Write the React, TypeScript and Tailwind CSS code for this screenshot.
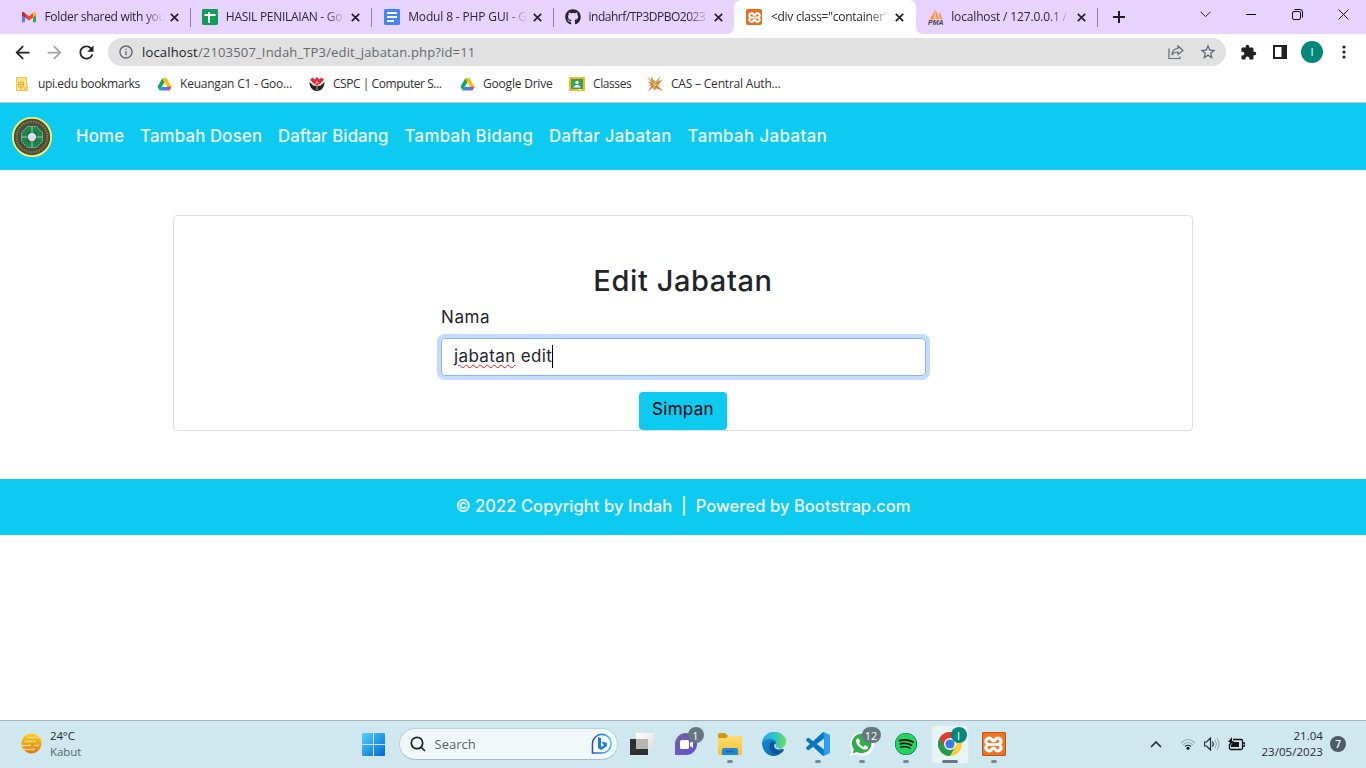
import type { ReactNode } from "react";
import { FaGithub, FaSpotify } from "react-icons/fa";
import { MdArrowBack, MdArrowForward, MdRefresh, MdInfoOutline, MdStarOutline, MdExtension } from "react-icons/md";

function Gmail() {
  return (
    <svg width="16" height="16" viewBox="0 0 16 16">
      <path d="M1 4v9.200h3V7z" fill="#4285f4" />
      <path d="M15 4v9.200h-3V7z" fill="#34a853" />
      <path d="M4 4.200v4.300l4 3 4-3V4.200L8 7.200z" fill="#ea4335" />
      <path d="M1 4.200v1.900l3 2.400V4.200C2.800 2.300 1 2.800 1 4.200z" fill="#c5221f" />
      <path d="M15 4.200v1.900l-3 2.400V4.200c1.200-1.900 3-1.400 3 0z" fill="#fbbc04" />
    </svg>
  );
}

function Sheets() {
  return (
    <svg width="16" height="16" viewBox="0 0 16 16">
      <rect width="16" height="16" rx="1.400" fill="#0f9d58" />
      <path d="M2.500 6h11M7 3v11" stroke="#fff" strokeWidth="2" />
    </svg>
  );
}

function Docs() {
  return (
    <svg width="16" height="16" viewBox="0 0 16 16">
      <rect width="16" height="16" rx="1.400" fill="#4285f4" />
      <path d="M3 4h10M3 8h10M3 12h7" stroke="#fff" strokeWidth="1.800" />
    </svg>
  );
}

function Xampp({ big = false }: { big?: boolean }) {
  return (
    <span className={big ? "flex size-6 items-center justify-center rounded-[2px] bg-[#ee7426] ring-1 ring-inset ring-[#b9551a]" : "flex size-4 items-center justify-center rounded-[2px] bg-[#e96b1c]"}>
      <svg width={big ? 19 : 13} height={big ? 19 : 13} viewBox="0 0 18 18" fill="none" stroke="#fff" strokeWidth="3">
        <path d="M6.600 9H5a3 3 0 1 1 2-5.100C7.800 4.700 7.300 5.700 9 5.700s1.200-1 2-1.800A3 3 0 1 1 13 9h-1.600M5 9a3 3 0 1 0 2 5.100c.8-.8.300-1.800 2-1.800s1.200 1 2 1.800A3 3 0 1 0 13 9" />
        <path d="M6 9h6" strokeWidth="2.500" />
      </svg>
    </span>
  );
}

function PhpMyAdmin() {
  return (
    <svg width="16" height="16" viewBox="0 0 16 16">
      <path d="M6.500 0c-.5 4-2.500 7-5 10.300h5zM7.300 1l.3 9.300h3C10.300 6 9 3 7.300 1zM11 3.200c1.800 2 2.700 4 3.500 7.100h-3z" fill="#f59b31" />
      <text x="0" y="15.800" fontSize="6.500" fontWeight="700" fontStyle="italic" fontFamily="Liberation Sans, sans-serif" textLength="15.500" lengthAdjust="spacingAndGlyphs" fill="#42424e">PMA</text>
    </svg>
  );
}

function Drive() {
  return (
    <svg width="15" height="15" viewBox="0 0 16 16">
      <path d="M5.500 1.500h5L5.200 10.700 2.800 14.500.5 10.500z" fill="#11a861" />
      <path d="M5.500 1.500h5l5 9h-5z" fill="#ffc107" />
      <path d="M5.200 10.500h10.300l-2.500 4H2.800z" fill="#3b7ff0" />
      <path d="M11 10.500h4.500l-2.400 4z" fill="#ea4335" />
      <path d="M8 5.500l2.800 5H5.200z" fill="#fff" />
    </svg>
  );
}

function YellowBook() {
  return (
    <svg width="12" height="14" viewBox="0 0 12 14">
      <path d="M.5.5h10v9h1v4H.5z" fill="#ffe38b" stroke="#e9c653" />
      <path d="M2.500 5h5v5h-5zM5 5v8M2.500 7.500h5M9 10v3" stroke="#dcb435" fill="none" />
    </svg>
  );
}

function Cspc() {
  return (
    <svg width="16" height="16" viewBox="0 0 16 16">
      <path d="M.5 6c0 12 15 12 15 0l-4 3.500-3.500.5-3.500-.5z" fill="#252525" />
      <path d="M1 3.500l3-2 1.500 2L8 1l2.500 2.500L12 1.500l3 2L11.500 8 8 10 4.500 8z" fill="#e22d32" />
      <path d="M1 5l5 4 2-4 2 4 5-4M8 9v5" stroke="#fff" strokeWidth=".6" fill="none" />
    </svg>
  );
}

function Classroom() {
  return (
    <svg width="16" height="14" viewBox="0 0 16 14">
      <rect width="16" height="14" rx="1" fill="#f2bb1d" />
      <rect x="2" y="2" width="12" height="10" fill="#35a15b" />
      <circle cx="8" cy="5.500" r="1.700" fill="#fff" />
      <path d="M4.500 10.500c0-3.500 7-3.500 7 0z" fill="#fff" />
      <path d="M9.500 12h3v1h-3z" fill="#fff" />
    </svg>
  );
}

function Cas() {
  return (
    <svg width="17" height="16" viewBox="0 0 17 16">
      <path d="M0 0l4.500 4L4 0l4.500 5.500L14.500 0 12 5l4.500-1.500L13 8l-1 1.500 5 6-7.500-3L8.500 15 6 12l-5 4 3.500-6L1 9l3-.500L1 5.500l3 .500z" fill="#c98c3d" />
      <path d="M3 3l6 7M6 13l4-5 5 6M12 3L7 9" stroke="#f6e3c4" strokeWidth=".6" fill="none" />
    </svg>
  );
}

const tabs: { icon: ReactNode; title: string; cls: string; active?: boolean }[] = [
  { icon: <Gmail />, title: "Folder shared with you", cls: "tracking-[-0.32px]" },
  { icon: <Sheets />, title: "HASIL PENILAIAN - Go", cls: "tracking-[-0.28px]" },
  { icon: <Docs />, title: "Modul 8 - PHP GUI - G", cls: "tracking-[-0.15px] pl-px" },
  { icon: <FaGithub size={16} color="#24292f" />, title: "indahrf/TP3DPBO2023", cls: "tracking-[-0.5px]" },
  { icon: <Xampp />, title: '<div class="container"', cls: "tracking-[-0.25px] pl-px", active: true },
  { icon: <PhpMyAdmin />, title: "localhost / 127.0.0.1 /", cls: "tracking-[-0.15px]" },
];

const bookmarks: { icon: ReactNode; label: string; box: string; cls: string }[] = [
  { icon: <YellowBook />, label: "upi.edu bookmarks", box: "w-[142px]", cls: "tracking-[-0.38px]" },
  { icon: <Drive />, label: "Keuangan C1 - Goo...", box: "w-[153px]", cls: "tracking-[-0.22px]" },
  { icon: <Cspc />, label: "CSPC | Computer S...", box: "w-[150px]", cls: "tracking-[-0.45px]" },
  { icon: <Drive />, label: "Google Drive", box: "w-[110px]", cls: "tracking-[-0.2px]" },
  { icon: <Classroom />, label: "Classes", box: "w-[78px]", cls: "tracking-[-0.4px]" },
  { icon: <Cas />, label: "CAS – Central Auth...", box: "w-[140px]", cls: "tracking-[-0.2px]" },
];

function TabStrip() {
  return (
    <div className="flex h-[34px] bg-[#e8d3ff] pl-[9px]">
      {tabs.map((t, i) => (
        <div key={t.title} className="relative flex h-[34px] w-[181.350px] shrink-0 items-center pl-3">
          {t.active && (
            <svg className="absolute -left-2 top-0" width="198" height="34" viewBox="0 0 198 34">
              <path d="M0 34Q8 34 8 26V8Q8 0 16 0H182Q190 0 190 8V26Q190 34 198 34z" fill="#fff" />
            </svg>
          )}
          <span className="relative flex w-[23.500px] shrink-0">{t.icon}</span>
          <span className={`relative w-[120px] shrink-0 overflow-hidden whitespace-nowrap text-[12px] leading-4 text-[#2b2531] [mask-image:linear-gradient(to_right,black_82%,transparent)] ${t.cls}`}>{t.title}</span>
          <svg className="relative ml-[5.500px] shrink-0" width="9" height="9" viewBox="0 0 9 9" stroke="#222" strokeWidth="1.700">
            <path d="M.8.8l7.400 7.400M8.200.8L.8 8.200" />
          </svg>
          {i !== 3 && !t.active && <span className="absolute right-[-0.600px] top-2 h-[19px] w-px bg-[#91859c]" />}
        </div>
      ))}
      <div className="flex w-[44px] items-center justify-center">
        <svg width="12" height="12" viewBox="0 0 12 12" stroke="#1d1d1f" strokeWidth="2"><path d="M6 0v12M0 6h12" /></svg>
      </div>
      <div className="ml-auto flex h-[29px] items-center">
        <span className="flex w-[46px] justify-center"><svg width="11" height="7" viewBox="0 0 11 7" fill="none" stroke="#222"><path d="M.5.7l5 5 5-5" /></svg></span>
        <span className="flex w-[46px] justify-center"><span className="h-px w-[10px] bg-black" /></span>
        <span className="flex w-[46px] justify-center">
          <svg width="11" height="11" viewBox="0 0 11 11" fill="none" stroke="#111"><rect x=".5" y="2.500" width="8" height="8" rx="1.500" /><path d="M2.500.5H8Q10.500.5 10.500 3v5.500" /></svg>
        </span>
        <span className="flex w-[46px] justify-center"><svg width="11" height="11" viewBox="0 0 11 11" stroke="#111"><path d="M.5.5l10 10M10.500.5l-10 10" /></svg></span>
      </div>
    </div>
  );
}

function Toolbar() {
  return (
    <div className="flex h-9 items-center pl-[6px]">
      <span className="flex w-8 justify-center"><MdArrowBack size={21} color="#202124" /></span>
      <span className="flex w-8 justify-center"><MdArrowForward size={21} color="#a3a3a3" /></span>
      <span className="flex w-8 justify-center"><MdRefresh size={21} color="#202124" /></span>
      <div className="ml-[6px] flex h-7 w-[1118px] items-center rounded-full bg-[#e1e1e1] pl-[10px] pr-[9px]">
        <MdInfoOutline size={16} color="#5f6368" />
        <span className="ml-2 whitespace-nowrap text-[13px] leading-5 tracking-[0.16px] text-[#66696d]"><span className="text-[#202124]">localhost</span>/2103507_Indah_TP3/edit_jabatan.php?id=11</span>
        <svg className="ml-auto" width="16" height="15" viewBox="0 0 16 15" fill="none" stroke="#686b6e" strokeWidth="1.200">
          <path d="M1 3.500V13.500h11V11.500" /><path d="M10 1l5 4.500-5 4V7C7 7 5 8 4 10c0-4 2.500-6.300 6-6.500z" />
        </svg>
        <MdStarOutline className="ml-[15px]" size={18} color="#5f6368" />
      </div>
      <span className="ml-[6px] flex w-8 justify-center"><MdExtension size={17} color="#202124" /></span>
      <span className="flex w-8 justify-center"><svg width="14" height="14" viewBox="0 0 14 14"><path d="M0 0h14v14H0zM2 2v10h6.500V2z" fill="#202124" fillRule="evenodd" /></svg></span>
      <span className="flex w-8 justify-center"><span className="flex size-[22px] items-center justify-center rounded-full bg-[#00897b] text-[11px] text-white">I</span></span>
      <span className="flex w-8 justify-center"><svg width="4" height="14" viewBox="0 0 4 14" fill="#202124"><circle cx="2" cy="2" r="1.600" /><circle cx="2" cy="7" r="1.600" /><circle cx="2" cy="12" r="1.600" /></svg></span>
    </div>
  );
}

function Emblem() {
  return (
    <svg width="40" height="40" viewBox="0 0 40 40">
      <circle cx="20" cy="20" r="19.100" fill="#49493f" stroke="#f9f36a" strokeWidth="1.800" />
      <circle cx="20" cy="20" r="15.300" fill="none" stroke="#8f8532" strokeWidth="2.200" strokeDasharray="1.300 1.300" />
      <circle cx="20" cy="20" r="12.700" fill="#4c4c46" />
      <path d="M15.500 9.500h9l6 6v9l-6 6h-9l-6-6v-9z" fill="#17894a" stroke="#9eb78d" strokeWidth=".7" />
      <path d="M20 9.500v21M9.500 20h21" stroke="#a9d3ac" strokeWidth=".9" />
      <path d="M15.500 15.500h9v9h-9z" fill="#4a4152" /><circle cx="20" cy="20" r="4.200" fill="#dcdde6" />
    </svg>
  );
}

const links = [
  { label: "Home", box: "w-16", cls: "tracking-[0.200px]" },
  { label: "Tambah Dosen", box: "w-[138px]", cls: "tracking-[0.180px]" },
  { label: "Daftar Bidang", box: "w-[126.500px]", cls: "tracking-[0.080px]" },
  { label: "Tambah Bidang", box: "w-[144.500px]", cls: "tracking-[0.330px]" },
  { label: "Daftar Jabatan", box: "w-[138.500px]", cls: "tracking-[0.300px]" },
  { label: "Tambah Jabatan", box: "w-[150px]", cls: "tracking-[0.450px]" },
];

function WebPage() {
  return (
    <main className="h-[617px] font-['Inter',sans-serif] text-base text-[#212529]">
      <nav className="flex h-[67px] items-center bg-[#0dcaf0] pl-3">
        <Emblem />
        <div className="mb-0.5 ml-6 flex whitespace-nowrap text-[16.800px] leading-6 font-[450] text-[#f3fcff]">
          {links.map((l) => <a key={l.label} className={`${l.box} ${l.cls}`}>{l.label}</a>)}
        </div>
      </nav>
      <section className="mx-auto mt-[45px] flex h-[216px] w-[1020px] flex-col items-center rounded border border-[#dfdfdf]">
        <h1 className="mt-[47px] whitespace-nowrap text-[29px] font-medium leading-[35px] tracking-[0.600px]">Edit Jabatan</h1>
        <form className="ml-[1px] mt-[7px] w-[485px]">
          <label className="block text-[17px] leading-6 tracking-[0.600px]">Nama</label>
          <div className="mt-[9px] flex h-[38px] items-center rounded border border-[#86b7fe] pb-px pl-3 text-[17px] shadow-[0_0_0_4px_#c2dbfe]">
            <span className="whitespace-nowrap tracking-[0.370px]"><span className="underline decoration-[#e11] decoration-wavy decoration-1 underline-offset-[2px]">jabatan</span> edit</span>
            <span className="h-[23px] w-px bg-black" />
          </div>
        </form>
        <button type="button" className="mt-4 h-[38px] w-[88px] shrink-0 rounded bg-[#0dcaf0] pb-0.5 text-[17px] tracking-[0.300px] text-black">Simpan</button>
      </section>
      <footer className="mt-12 flex h-14 items-center justify-center whitespace-pre bg-[#0dcaf0] pb-0.5 text-[16.600px] font-[450] text-[#f6fdff]">
        <span className="tracking-[0.020px]">© 2022 Copyright by Indah&nbsp; |&nbsp; Powered by Bootstrap.com</span>
      </footer>
    </main>
  );
}

function Bing() {
  return (
    <svg width="22" height="22" viewBox="0 0 22 22">
      <defs><linearGradient id="bing" x1="0" x2="1"><stop stopColor="#2753c8" /><stop offset="1" stopColor="#38c6f4" /></linearGradient></defs>
      <path d="M1.500 20V10.500A9.300 9.300 0 1 1 10.500 20z" fill="#fff" stroke="url(#bing)" strokeWidth="1.600" />
      <path d="M7 4l3 1.200v8.800l3.500-2-1.700-.8-1-2.700L15.800 10v3.300L10 17l-3-2z" fill="#167be2" />
    </svg>
  );
}

function TaskView() {
  return (
    <svg width="24" height="22" viewBox="0 0 24 22">
      <defs><linearGradient id="white" x1="0" x2="1" y2="1"><stop stopColor="#fff" /><stop offset="1" stopColor="#ddd" /></linearGradient></defs>
      <path d="M0 6h18v16H0z" fill="#30302f" /><path d="M6 0h18v16H6z" fill="url(#white)" /><path d="M6 6h12v10H6z" fill="#b6b7b5" />
    </svg>
  );
}

function Chat() {
  return (
    <svg width="24" height="24" viewBox="0 0 24 24">
      <defs><linearGradient id="chat" x1="0" x2="1" y2="1"><stop stopColor="#7d6196" /><stop offset="1" stopColor="#5752d8" /></linearGradient></defs>
      <path d="M1 23V12A11 11 0 1 1 12 23z" fill="url(#chat)" /><rect x="6" y="8" width="9" height="9" rx="1.500" fill="#fff" /><path d="M16 11l3-2v7l-3-2z" fill="#fff" />
    </svg>
  );
}

function Folder() {
  return (
    <svg width="24" height="24" viewBox="0 0 24 24">
      <defs><linearGradient id="folder" x1="0" x2="0" y2="1"><stop stopColor="#ffdf70" /><stop offset="1" stopColor="#f8be31" /></linearGradient></defs>
      <path d="M0 3q0-2 2-2h5l3 3h12q2 0 2 2v5H0z" fill="#d6990d" /><path d="M0 6h8l2-2h12q2 0 2 2v15q0 2-2 2H2q-2 0-2-2z" fill="url(#folder)" />
      <path d="M4 23v-5q0-2 2-2h12q2 0 2 2v5z" fill="#2088d7" /><path d="M8 19.500h8" stroke="#1365a9" strokeWidth="1.500" />
    </svg>
  );
}

function Edge() {
  return (
    <svg width="24" height="24" viewBox="0 0 24 24">
      <defs><linearGradient id="edge-top" x1="0" x2="1"><stop stopColor="#24a7e4" /><stop offset=".5" stopColor="#2ac3d2" /><stop offset="1" stopColor="#70df55" /></linearGradient><linearGradient id="edge-low" x1="0" x2="1" y2="1"><stop stopColor="#1697dc" /><stop offset="1" stopColor="#0b559f" /></linearGradient></defs>
      <path d="M0 11C1 4 6 0 12 0c7 0 12 5 12 10l-4 4.500-1.500 2 3.500.500c-2 4-6 7-10 7C5 24 0 18 0 11z" fill="url(#edge-low)" />
      <path d="M0 11C1 4 6 0 12 0c7 0 12 5 12 10 0 4-3 6-6 6-4 0-5-1-4-3 1-4-2-6-6-6-4 0-7 2-8 4z" fill="url(#edge-top)" />
      <path d="M9 10c-4 5 0 12 7 12 3-1 5-2 6-4-5 2-10 0-10-4 0-2 1-3 1-4z" fill="#13529b" />
      <path d="M13 11.500c-2 3 0 5.500 4 6 3 0 5-1 7-3l-1 2c-1 .8-4 .3-6-.3-3-.7-4-1.700-3-3.200z" fill="#cfe8ef" />
    </svg>
  );
}

function VSCode() {
  return (
    <svg width="24" height="24" viewBox="0 0 24 24">
      <defs><linearGradient id="code" x1="0" x2="1"><stop offset=".7" stopColor="#0b75be" /><stop offset=".78" stopColor="#29a0ea" /></linearGradient></defs>
      <path fill="url(#code)" d="M23.150 2.587L18.210.210a1.494 1.494 0 0 0-1.705.290l-9.460 8.630-4.120-3.128a.999.999 0 0 0-1.276.057L.327 7.261A1 1 0 0 0 .326 8.740L3.899 12 .326 15.260a1 1 0 0 0 .001 1.479L1.650 17.940a.999.999 0 0 0 1.276.057l4.120-3.128 9.460 8.630a1.492 1.492 0 0 0 1.704.290l4.942-2.377A1.500 1.500 0 0 0 24 20.060V3.939a1.500 1.500 0 0 0-.850-1.352zm-5.146 14.861L10.826 12l7.178-5.448v10.896z" />
    </svg>
  );
}

function Chrome() {
  return (
    <svg width="24" height="24" viewBox="0 0 24 24">
      <circle cx="12" cy="12" r="12" fill="#ffcf32" />
      <path d="M12 12L1.600 6A12 12 0 0 1 22.400 6H12z" fill="#e33b2e" />
      <path d="M12 12L1.600 6A12 12 0 0 0 12 24l5.200-9z" fill="#249b4e" />
      <path d="M1.600 6L7 15l5-9z" fill="#e33b2e" />
      <circle cx="12" cy="12" r="6" fill="#fff" /><circle cx="12" cy="12" r="4.600" fill="#3a79e8" />
    </svg>
  );
}

function WhatsApp() {
  return (
    <svg width="24" height="24" viewBox="0 0 24 24">
      <path d="M0 24l1.700-6.200A11.900 11.900 0 1 1 6.200 22.400z" fill="#fff" /><path d="M2.800 21.200l1-4A9.800 9.800 0 1 1 7 20z" fill="#31ae45" />
      <path fill="#fff" d="M17.472 14.382c-.297-.149-1.758-.867-2.030-.967-.273-.099-.471-.148-.670.150-.197.297-.767.966-.940 1.164-.173.199-.347.223-.644.075-.297-.150-1.255-.463-2.390-1.475-.883-.788-1.480-1.761-1.653-2.059-.173-.297-.018-.458.130-.606.134-.133.298-.347.446-.520.149-.174.198-.298.298-.497.099-.198.050-.371-.025-.520-.075-.149-.669-1.612-.916-2.207-.242-.579-.487-.500-.669-.510-.173-.008-.371-.010-.570-.010-.198 0-.520.074-.792.372-.272.297-1.040 1.016-1.040 2.479 0 1.462 1.065 2.875 1.213 3.074.149.198 2.096 3.200 5.077 4.487.709.306 1.262.489 1.694.625.712.227 1.360.195 1.871.118.571-.085 1.758-.719 2.006-1.413.248-.694.248-1.289.173-1.413-.074-.124-.272-.198-.570-.347" />
    </svg>
  );
}

const apps: { name: string; icon: ReactNode; badge?: string; running?: boolean; active?: boolean }[] = [
  { name: "view", icon: <TaskView /> },
  { name: "chat", icon: <Chat />, badge: "1" },
  { name: "folder", icon: <Folder />, running: true },
  { name: "edge", icon: <Edge /> },
  { name: "code", icon: <VSCode />, running: true },
  { name: "whatsapp", icon: <WhatsApp />, badge: "12", running: true },
  { name: "spotify", icon: <span className="flex rounded-full bg-[#151515]"><FaSpotify size={22} color="#1ed760" /></span>, running: true },
  { name: "chrome", icon: <Chrome />, badge: "I", running: true, active: true },
  { name: "xampp", icon: <Xampp big />, running: true },
];

function Taskbar() {
  return (
    <footer className="flex h-12 items-start border-t border-[#a9b5be] bg-[#cfe8ef]">
      <div className="flex h-[45px] w-[351.500px] items-center pl-5">
        <svg width="23" height="21" viewBox="0 0 23 21">
          <defs><linearGradient id="sun" x1="0" x2="0" y2="1"><stop stopColor="#ffd000" /><stop offset="1" stopColor="#e57314" /></linearGradient></defs>
          <circle cx="11.500" cy="10.500" r="10" fill="url(#sun)" /><path d="M7 4.500h16M4 8.500h12M0 12.500h11M14 12.500h5M0 16.500h15" stroke="#f5d79a" strokeWidth="1.600" />
        </svg>
        <div className="ml-[7px] text-[11.500px] leading-4 tracking-[-0.150px] text-[#1e2629]"><div>24°C</div><div className="tracking-[-0.050px] text-[#57666c]">Kabut</div></div>
      </div>
      <div className="flex h-[47px] w-11 items-center justify-center">
        <svg width="23" height="23" viewBox="0 0 23 23"><defs><linearGradient id="win" x1="0" x2="1" y2="1"><stop stopColor="#52d1ff" /><stop offset="1" stopColor="#0068cf" /></linearGradient></defs><path d="M0 1q0-1 1-1h10v11H0zM12 0h10q1 0 1 1v10H12zM0 12h11v11H1q-1 0-1-1zM12 12h11v10q0 1-1 1H12z" fill="url(#win)" /></svg>
      </div>
      <div className="ml-[3px] mt-[7px] flex h-[32px] w-[219px] items-center rounded-full border border-[#bed1d9] border-b-[#a8c0c9] bg-[#f1f8fa] pl-[10px] pr-1">
        <svg width="16" height="16" viewBox="0 0 16 16" fill="none" stroke="#222" strokeWidth="1.700"><circle cx="7" cy="7" r="5.700" /><path d="M11 11l4 4" /></svg>
        <span className="ml-[9px] mt-px text-[13px] text-[#596064]">Search</span>
        <span className="ml-auto"><Bing /></span>
      </div>
      <div className="ml-[2px] flex">
        {apps.map((a) => (
          <div key={a.name} className="relative flex h-[46px] w-11 items-center justify-center">
            {a.active && <span className="absolute left-[3px] top-1 h-[39px] w-[38px] rounded border border-[#dbe7eb] bg-[#e7f3f7]" />}
            <span className="relative flex">{a.icon}</span>
            {a.badge && <span className={`absolute flex h-4 items-center justify-center rounded-full text-[11px] leading-none text-white ${a.badge === "12" ? "right-[3px] top-[6px] w-[19px] bg-[#657781]" : a.active ? "right-[5px] top-[6px] w-4 bg-[#00897b]" : "right-[4px] top-[6px] w-4 bg-[#657781]"}`}>{a.badge}</span>}
            {a.running && <span className={a.active ? "absolute bottom-[4px] h-[3px] w-4 rounded-full bg-[#65778a]" : "absolute bottom-[4px] h-[3px] w-[6px] rounded-full bg-[#788b93]"} />}
          </div>
        ))}
      </div>
      <div className="ml-auto flex h-[46px] items-center pr-5">
        <svg className="mr-[18px]" width="12" height="7" viewBox="0 0 12 7" fill="none" stroke="#202628" strokeWidth="1.600"><path d="M1 6l5-5 5 5" /></svg>
        <svg width="16" height="12" viewBox="0 0 16 12" fill="none"><path d="M1 5Q8-2 15 5M3 7Q8 2 13 7" stroke="#94a9b0" strokeWidth="1.100" /><path d="M5 8.500Q8 6 11 8.500" stroke="#1d292e" strokeWidth="1.200" /><circle cx="8" cy="10.300" r="1.500" fill="#111" /></svg>
        <svg className="ml-2" width="16" height="14" viewBox="0 0 16 14" fill="none" stroke="#1d292e"><path d="M.5 5h2l4-4v12l-4-4h-2zM8.500 4.500q1.500 2.500 0 5" strokeWidth="1.200" /><path d="M11 3q3 4 0 8M13 1q4 6 0 12" stroke="#94a9b0" /></svg>
        <svg className="ml-2" width="17" height="14" viewBox="0 0 17 14"><path d="M5 2.500h8q1.500 0 1.500 1.500v7q0 1.500-1.500 1.500H3q-1.500 0-1.500-1.500V7M15 6h2v3h-2" fill="none" stroke="#111" strokeWidth="1.300" /><path d="M5 5h6v5H3V8zM4 0L0 5h2L1 9l5-5H4z" fill="#111" /></svg>
        <div className="ml-[15px] w-[63px] whitespace-nowrap text-right text-[11.500px] leading-4 tracking-[0.050px] text-[#1f292d]"><div>21.04</div><div>23/05/2023</div></div>
        <span className="ml-[7px] flex size-4 items-center justify-center rounded-full bg-[#4b5d69] text-[10px] font-semibold text-white">7</span>
      </div>
    </footer>
  );
}

export default function App() {
  return (
    <div className="h-[768px] w-[1366px] overflow-hidden bg-white font-['Open_Sans',sans-serif]">
      <TabStrip />
      <Toolbar />
      <div className="flex h-[33px] items-center border-b border-[#c4ccd0] pb-1 pl-[14px]">
        {bookmarks.map((b) => (
          <div key={b.label} className={`flex h-7 shrink-0 items-center ${b.box}`}>
            <span className="flex w-4 justify-center">{b.icon}</span><span className={`ml-2 whitespace-nowrap text-[12px] text-[#303034] ${b.cls}`}>{b.label}</span>
          </div>
        ))}
      </div>
      <WebPage />
      <Taskbar />
    </div>
  );
}
